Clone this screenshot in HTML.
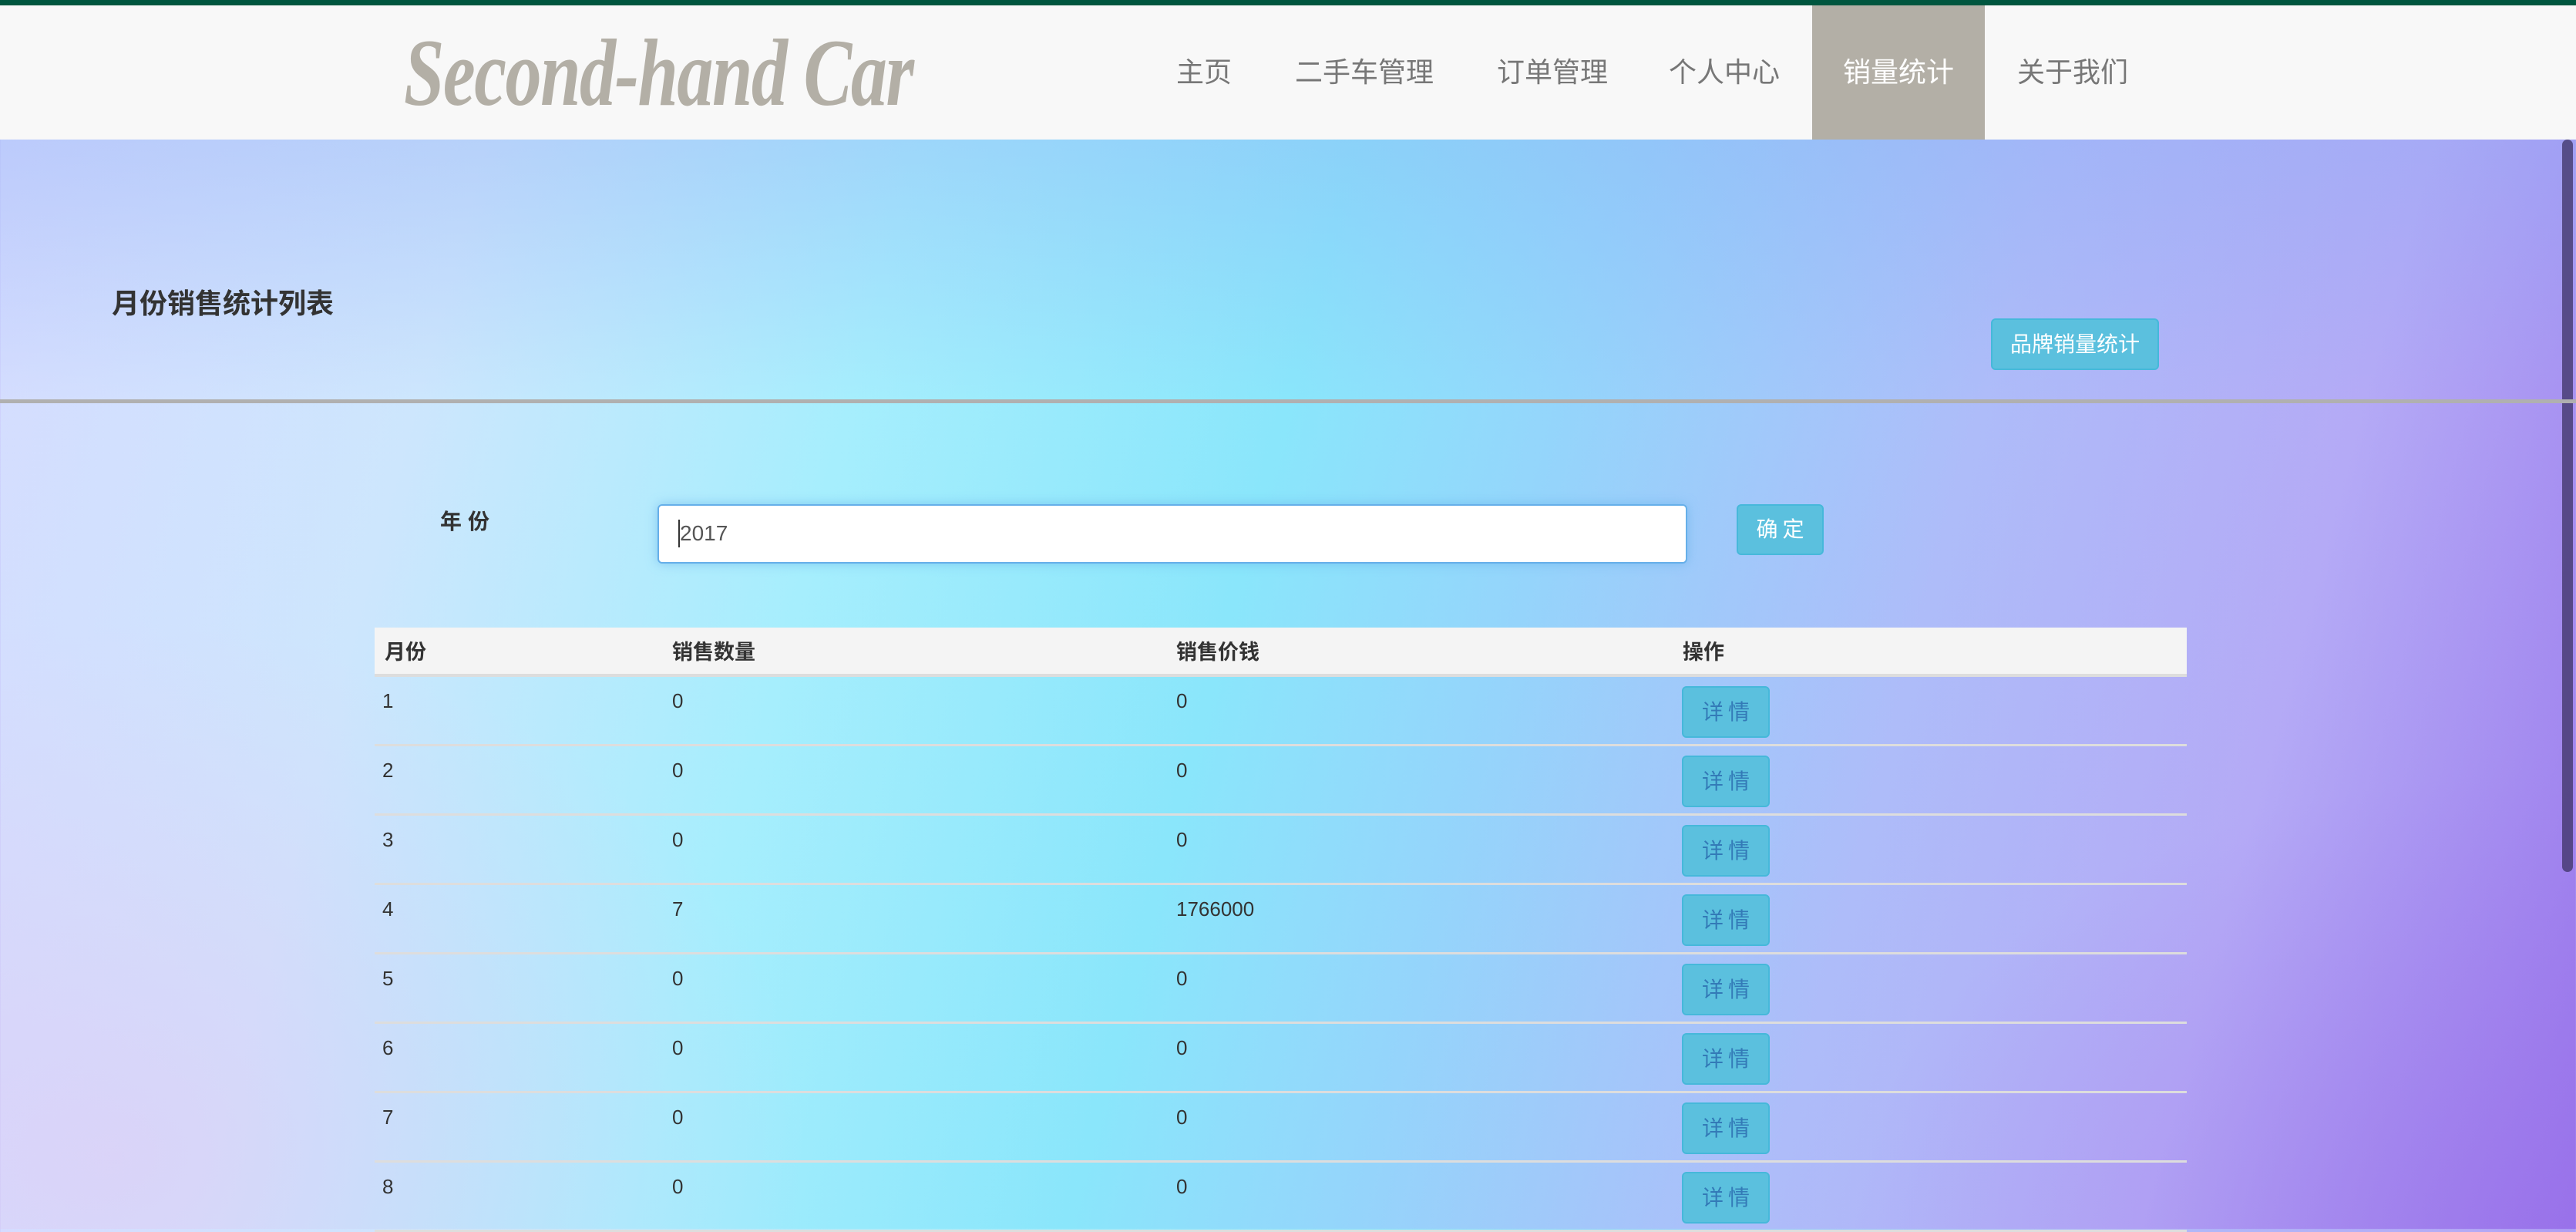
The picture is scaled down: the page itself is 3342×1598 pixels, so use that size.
<!DOCTYPE html>
<html><head><meta charset="utf-8"><style>
*{margin:0;padding:0;box-sizing:border-box}
body{width:3342px;height:1594px;overflow:hidden;position:relative;font-family:"Liberation Sans","Noto Sans CJK SC",sans-serif;
background:linear-gradient(105deg,#d6dbff 0%,#cde6fd 18%,#a6eefd 33%,#8ae6fb 48%,#95d4fb 58%,#aebcf9 72%,#b4aaf6 85%,#9a78ec 100%);}
.ov{position:absolute;left:0;top:0;width:3342px;height:1594px;background:radial-gradient(ellipse 900px 700px at 150px 1500px,rgba(225,200,245,.6),rgba(225,200,245,0)),radial-gradient(ellipse 900px 600px at 3300px 1600px,rgba(150,100,230,.35),rgba(150,100,230,0)),linear-gradient(180deg,rgba(140,170,245,.35) 180px,rgba(140,170,245,0) 520px)}
.a{position:absolute;white-space:nowrap}
.top{left:0;top:0;width:3342px;height:7px;background:#00563f}
.hdr{left:0;top:7px;width:3342px;height:174px;background:#f8f8f8}
.logo{left:524px;top:24px;font-family:"Liberation Serif",serif;font-style:italic;font-weight:bold;font-size:124px;color:#b3afa6;transform:scaleX(0.76);transform-origin:left top;letter-spacing:-2px}
.nav{top:7px;height:174px;line-height:174px;font-size:36px;color:#777}
.act{left:2351px;top:7px;width:224px;height:174px;background:#b3afa6}
.btn{background:#5bc0de;border:2px solid #46b8da;border-radius:6px;color:#fff;text-align:center}
.row{position:absolute;left:486px;width:2351px;height:90px;border-bottom:3px solid #ddd;font-size:26px;color:#333}
.row span{position:absolute;top:16px}
.det{position:absolute;left:1696px;top:12px;width:114px;height:67px;line-height:63px;font-size:28px;color:#337ab7;letter-spacing:6px;text-indent:6px}
</style></head><body>
<div class="ov"></div>
<div class="a top"></div>
<div class="a hdr"></div>
<div class="a logo">Second-hand Car</div>
<div class="a act"></div>
<div class="a nav" style="left:1526px">主页</div>
<div class="a nav" style="left:1680px">二手车管理</div>
<div class="a nav" style="left:1942px">订单管理</div>
<div class="a nav" style="left:2165px">个人中心</div>
<div class="a nav" style="left:2391px;color:#fff">销量统计</div>
<div class="a nav" style="left:2617px">关于我们</div>
<div class="a" style="left:3324px;top:181px;width:14px;height:950px;background:rgba(60,50,100,.75);border-radius:7px"></div>
<div class="a" style="left:145px;top:365px;font-size:36px;font-weight:bold;color:#333">月份销售统计列表</div>
<div class="a btn" style="left:2583px;top:413px;width:218px;height:67px;line-height:63px;font-size:28px">品牌销量统计</div>
<div class="a" style="left:0;top:518px;width:3342px;height:5px;background:#b0b0b0"></div>
<div class="a" style="left:571px;top:655px;font-size:28px;font-weight:bold;color:#333;letter-spacing:8px">年份</div>
<div class="a" style="left:853px;top:654px;width:1336px;height:77px;background:#fff;border:2px solid #66afe9;border-radius:6px;box-shadow:0 0 14px rgba(102,175,233,.6)"></div>
<div class="a" style="left:880px;top:674px;font-size:28px;color:#555;border-left:2px solid #333;line-height:36px">2017</div>
<div class="a btn" style="left:2253px;top:654px;width:113px;height:66px;line-height:62px;font-size:28px;letter-spacing:6px;text-indent:6px">确定</div>
<div class="a" style="left:486px;top:814px;width:2351px;height:64px;background:#f4f4f4;border-bottom:4px solid #ddd;font-size:27px;font-weight:bold;color:#333">
<span style="position:absolute;left:13px;top:10px">月份</span><span style="position:absolute;left:386px;top:10px">销售数量</span><span style="position:absolute;left:1040px;top:10px">销售价钱</span><span style="position:absolute;left:1697px;top:10px">操作</span></div>
<div class="row" style="top:878px"><span style="left:10px">1</span><span style="left:386px">0</span><span style="left:1040px">0</span><div class="det btn">详情</div></div>
<div class="row" style="top:968px"><span style="left:10px">2</span><span style="left:386px">0</span><span style="left:1040px">0</span><div class="det btn">详情</div></div>
<div class="row" style="top:1058px"><span style="left:10px">3</span><span style="left:386px">0</span><span style="left:1040px">0</span><div class="det btn">详情</div></div>
<div class="row" style="top:1148px"><span style="left:10px">4</span><span style="left:386px">7</span><span style="left:1040px">1766000</span><div class="det btn">详情</div></div>
<div class="row" style="top:1238px"><span style="left:10px">5</span><span style="left:386px">0</span><span style="left:1040px">0</span><div class="det btn">详情</div></div>
<div class="row" style="top:1328px"><span style="left:10px">6</span><span style="left:386px">0</span><span style="left:1040px">0</span><div class="det btn">详情</div></div>
<div class="row" style="top:1418px"><span style="left:10px">7</span><span style="left:386px">0</span><span style="left:1040px">0</span><div class="det btn">详情</div></div>
<div class="row" style="top:1508px"><span style="left:10px">8</span><span style="left:386px">0</span><span style="left:1040px">0</span><div class="det btn">详情</div></div>
</body></html>
